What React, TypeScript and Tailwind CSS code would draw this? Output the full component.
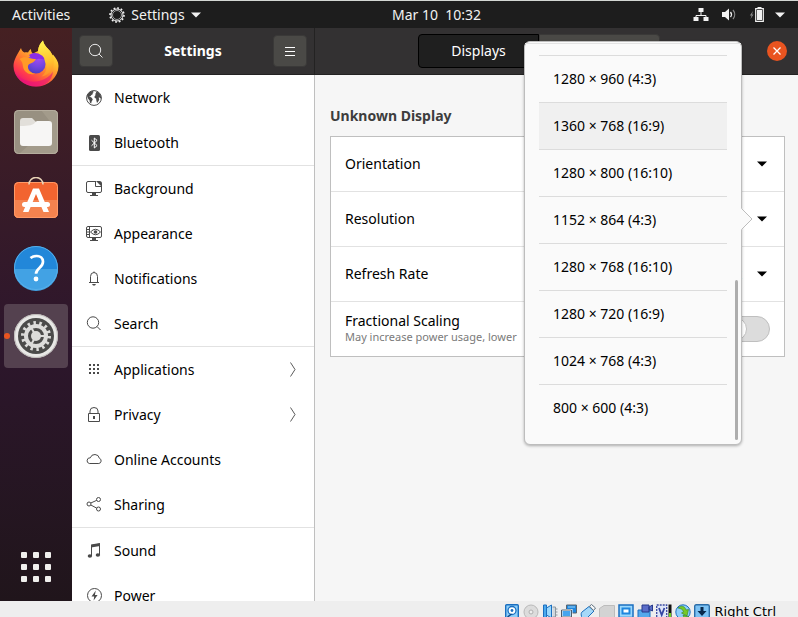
import type { ReactNode } from "react";

const stroke = { fill: "none", stroke: "#4a4a4a", strokeWidth: 1 } as const;

function Icon({ children }: { children: ReactNode }) {
  return (
    <svg width="16" height="16" viewBox="0 0 16 16" className="shrink-0" aria-hidden="true">
      {children}
    </svg>
  );
}

const icons = {
  network: (
    <Icon>
      <circle cx="8" cy="8" r="7.400" {...stroke} />
      <path
        fill="#4a4a4a"
        d="M1 5.200 3.400 2 7 .8l.6 1.400L6.400 3l.6 1-1.600 1L4.500 6.200l-1.500 0 2.800 1.600 1 1.600-1.200 2-.4 2.200-1.400-1L3.600 10.400 2 8.400 1.300 6.400ZM9.800 1.500l3 1 2 2.900.3 2.600-1 .6-.8-1.400-.6.6.6 2-1.400 2.200-.9 1-.7-2.800-.2-1.600-1.400-.6-.2-1.600L9.600 5l-.4-1.200 1-.8Z"
      />
    </Icon>
  ),
  bluetooth: (
    <Icon>
      <rect x="3" width="11" height="16" rx="1.500" fill="#4a4a4a" />
      <path d="m5.500 5.200 5.600 5.400-2.800 2.400V3l2.800 2.400-5.600 5.400" fill="none" stroke="#fff" />
    </Icon>
  ),
  background: (
    <Icon>
      <path d="M10 .5H2A1.500 1.500 0 0 0 .5 2v8A1.500 1.500 0 0 0 2 11.500h12a1.500 1.500 0 0 0 1.500-1.500V5M9.500 1v4.500h5.500" {...stroke} />
      <path d="M10 0h3.500A2.500 2.500 0 0 1 16 2.500V6Z" fill="#4a4a4a" />
      <path d="M6 12h4v2h2v1H4v-1h2Z" fill="#4a4a4a" />
    </Icon>
  ),
  appearance: (
    <Icon>
      <rect x=".5" y=".5" width="15" height="11" rx="1.500" {...stroke} />
      <path d="M3.500 1v10M1 3.500h2M1 6h2M1 8.500h2" {...stroke} />
      <path d="M4.500 6Q9.500.5 14.500 6 9.500 11.500 4.500 6Z" {...stroke} />
      <circle cx="9.500" cy="6" r="1.800" fill="#4a4a4a" />
      <path d="M6 12h4v2h2v1H4v-1h2Z" fill="#4a4a4a" />
    </Icon>
  ),
  notifications: (
    <Icon>
      <path d="M3 11.500h10M4.500 11V5.500a3.500 4 0 0 1 7 0V11M8 1.500V.5" {...stroke} />
      <path d="M6 13h4l-1 1.500H7Z" fill="#4a4a4a" />
    </Icon>
  ),
  search: (
    <Icon>
      <circle cx="7" cy="6.500" r="5.700" {...stroke} />
      <path d="m11 10.500 3.500 3.500" {...stroke} />
    </Icon>
  ),
  applications: (
    <Icon>
      {[3, 7, 11].map((x) => [2, 6, 10].map((y) => <rect key={`${x}-${y}`} x={x} y={y} width="2" height="2" fill="#4a4a4a" />))}
    </Icon>
  ),
  privacy: (
    <Icon>
      <path d="M2.500 6.500h11v8h-11ZM4 6V4a4 3.500 0 0 1 8 0V6" {...stroke} />
      <path d="M7 9h2v3H7Z" fill="#4a4a4a" />
    </Icon>
  ),
  accounts: (
    <Icon>
      <path d="M3.300 11.500h9.500a2.700 2.700 0 0 0 .6-5.200A4.700 4.700 0 0 0 4.300 5.800 2.900 2.900 0 0 0 3.300 11.500Z" {...stroke} />
    </Icon>
  ),
  sharing: (
    <Icon>
      <circle cx="3" cy="7" r="2" {...stroke} />
      <circle cx="12.500" cy="2.500" r="2" {...stroke} />
      <circle cx="12.500" cy="12" r="2" {...stroke} />
      <path d="m4.800 6 6-2.700M4.800 8l6 3.200" {...stroke} />
    </Icon>
  ),
  sound: (
    <Icon>
      <path d="M5.500 13V2.500l8-1.500v11" {...stroke} />
      <path d="m5 1.500 9-1.500v3L5 4.500Z" fill="#4a4a4a" />
      <ellipse cx="3.900" cy="13" rx="2.200" ry="1.800" fill="#4a4a4a" />
      <ellipse cx="11.900" cy="12" rx="2.200" ry="1.800" fill="#4a4a4a" />
    </Icon>
  ),
  power: (
    <Icon>
      <circle cx="8.500" cy="7.500" r="7" {...stroke} />
      <path d="m9.800 2.500-4.300 6h2.700l-.6 4 4-5.500H8.900Z" fill="#4a4a4a" />
    </Icon>
  ),
};

const groups: { label: string; icon: ReactNode; sub?: boolean }[][] = [
  [
    { label: "Network", icon: icons.network },
    { label: "Bluetooth", icon: icons.bluetooth },
  ],
  [
    { label: "Background", icon: icons.background },
    { label: "Appearance", icon: icons.appearance },
    { label: "Notifications", icon: icons.notifications },
    { label: "Search", icon: icons.search },
  ],
  [
    { label: "Applications", icon: icons.applications, sub: true },
    { label: "Privacy", icon: icons.privacy, sub: true },
    { label: "Online Accounts", icon: icons.accounts },
    { label: "Sharing", icon: icons.sharing },
  ],
  [
    { label: "Sound", icon: icons.sound },
    { label: "Power", icon: icons.power },
  ],
];

const resolutions = [
  "1280 × 960 (4:3)",
  "1360 × 768 (16:9)",
  "1280 × 800 (16:10)",
  "1152 × 864 (4:3)",
  "1280 × 768 (16:10)",
  "1280 × 720 (16:9)",
  "1024 × 768 (4:3)",
  "800 × 600 (4:3)",
];

function Caret({ color }: { color: string }) {
  return (
    <svg width="10" height="6" viewBox="0 0 10 6" className="shrink-0" aria-hidden="true">
      <path d="M0 .5h10L5 5.500Z" fill={color} />
    </svg>
  );
}

function TopBar() {
  return (
    <header className="flex h-7 shrink-0 items-center border-t border-[#d3d7d3] bg-[#1d1d1d] text-sm leading-5 text-[#f2f2f2]">
      <div className="flex w-[392px] shrink-0 items-center pl-3">
        <button type="button">Activities</button>
        <button type="button" className="ml-[39px] flex items-center gap-1.5">
          <svg width="16" height="16" viewBox="0 0 16 16" aria-hidden="true">
            <circle cx="8" cy="8" r="7" fill="none" stroke="#f2f2f2" strokeWidth="1.600" strokeDasharray="1.800 1.860" />
            <circle cx="8" cy="8" r="6" fill="none" stroke="#f2f2f2" strokeWidth="1" />
            <circle cx="8" cy="8" r="4.500" fill="none" stroke="#f2f2f2" strokeWidth=".6" />
          </svg>
          Settings
          <Caret color="#f2f2f2" />
        </button>
      </div>
      <button type="button" className="whitespace-pre">{"Mar 10  10:32"}</button>
      <button type="button" aria-label="System menu" className="ml-auto flex items-center gap-2.5 pr-[13px]">
        <span className="flex items-center gap-3">
          <svg width="16" height="16" viewBox="0 0 16 16" aria-hidden="true">
            <path d="M5.500 1h5v4h-5ZM.5 10h5v4h-5ZM10.500 10h5v4h-5Z" fill="#f2f2f2" />
            <path d="M8 5v3M3 11V8.500h10V11" fill="none" stroke="#f2f2f2" />
          </svg>
          <svg width="16" height="16" viewBox="0 0 16 16" aria-hidden="true">
            <path d="M1 5h3l4-3.500v12L4 10H1Z" fill="#f2f2f2" />
            <path d="M9.500 5a4 4 0 0 1 0 5" fill="none" stroke="#f2f2f2" strokeWidth="1.300" />
            <path d="M12 3a7 7 0 0 1 0 9" fill="none" stroke="#8a8a8a" strokeWidth="1.300" />
          </svg>
          <svg width="16" height="16" viewBox="0 0 16 16" aria-hidden="true">
            <path d="M4 4 .8 8.500h1.800L1.500 12l3-4.500H3Z" fill="#8a8a8a" />
            <path d="M6.700 1.700h7.600v12.600H6.700Z" fill="none" stroke="#f2f2f2" strokeWidth="1.200" />
            <path d="M8.500 0h4v2h-4ZM8 3h5v10H8Z" fill="#f2f2f2" />
          </svg>
        </span>
        <Caret color="#f2f2f2" />
      </button>
    </header>
  );
}

function Firefox() {
  return (
    <svg width="46" height="48" viewBox="0 2 46 48" aria-hidden="true">
      <defs>
        <linearGradient id="ffBody" x1="0.850" y1="0.100" x2="0.250" y2="1">
          <stop offset="0" stopColor="#fff44f" />
          <stop offset=".3" stopColor="#ffbd2e" />
          <stop offset=".55" stopColor="#ff7a2f" />
          <stop offset=".8" stopColor="#ff3750" />
          <stop offset="1" stopColor="#e3117a" />
        </linearGradient>
        <linearGradient id="ffFlame" x1=".5" y1="0" x2=".6" y2="1">
          <stop offset="0" stopColor="#fff44f" />
          <stop offset=".6" stopColor="#ffc22e" />
          <stop offset="1" stopColor="#ff8a2a" />
        </linearGradient>
        <radialGradient id="ffGlobe" cx=".6" cy=".15" r=".9">
          <stop offset="0" stopColor="#a94bf5" />
          <stop offset=".55" stopColor="#7446e0" />
          <stop offset="1" stopColor="#4a3ec0" />
        </radialGradient>
      </defs>
      <path
        d="M8 10c.5 2 1.500 3.500 3.500 4.500 1-.5 2.500-.5 3.500 0 1-2 2-3 3-3.500 0 2 .5 3.500 2 4.500L25 13c.5-5 2.500-8 5-10.500 1 5 4 7 7 10.500 1 1.500 1.700 3 2 4.500l1-1c3 3.500 5.500 7 5.500 11.500a22.500 20.500 0 0 1-45 0c0-6 4-12 7.500-18Z"
        fill="url(#ffBody)"
      />
      <path d="M25 13c.5-5 2.500-8 5-10.500 1 5 4 7 7 10.500 3 4 4.500 8 3.500 14-1 6-6 10.500-12 11.500 5-4 6-9 4-14-1-4-6-5-7.500-11.500Z" fill="url(#ffFlame)" />
      <circle cx="23" cy="26" r="9.500" fill="url(#ffGlobe)" />
      <path d="M16 17c4-3 9-2.500 12 0 2 1 3 2.500 3.500 4.500-3-1-5-1-7-.5-2 .5-3 1.500-3.500 2.800Z" fill="#8b2ee5" />
      <path d="M6.500 21c3-2 6-2.500 10-1 2 .8 4 1 6.500 1-1 2.500-3 3.500-5.500 4.500-1.500.6-3 1.500-2.500 4 .3 3 3 5.500 7 6.300-6 2-11-2-12-7-.3-3-.5-5-3.500-7.800Z" fill="#ff9a27" />
      <path d="M1 32c3 8 13 12.500 22 11.500 8-1 14-5 17-10-1 10-8.500 15-17 15S4 43 1 32Z" fill="#e6127c" opacity=".6" />
    </svg>
  );
}

function Files() {
  return (
    <svg width="46" height="46" viewBox="0 0 46 46" aria-hidden="true">
      <rect x="1" y="1" width="44" height="44" rx="4.500" fill="#989081" />
      <path d="M28 1h12.500A4.500 4.500 0 0 1 45 5.500v35a4.500 4.500 0 0 1-4.500 4.500H6l33-30Z" fill="#a39b8b" />
      <rect x="1.500" y="1.500" width="43" height="43" rx="4" fill="none" stroke="#b5ad9e" />
      <path d="M7 12a3 3 0 0 1 3-3h9l4 4h12v8H7Z" fill="#e2dfda" />
      <path d="M7 17c4 0 13 0 15-3.500 1-1.500 2-1.500 3-1.500h11a3 3 0 0 1 3 3v19a3 3 0 0 1-3 3H10a3 3 0 0 1-3-3Z" fill="#f7f6f5" />
    </svg>
  );
}

function Software() {
  return (
    <svg width="46" height="46" viewBox="0 2 46 46" aria-hidden="true">
      <rect x="1" y="7" width="44" height="36" rx="4.500" fill="#f26430" />
      <path d="M1 25h44v13.500a4.500 4.500 0 0 1-4.500 4.500h-35A4.500 4.500 0 0 1 1 38.500Z" fill="#f5834f" />
      <rect x="1.500" y="7.500" width="43" height="35" rx="4" fill="none" stroke="#ff9a68" />
      <path d="M16 9.500a7 7 0 0 1 14 0" fill="none" stroke="#e8d3b6" strokeWidth="1.600" />
      <path d="m20 13.500h6L36 37h-5.500L23 19l-7.500 18H10Z" fill="#fff" />
      <rect x="9" y="27" width="28" height="5" rx="2.500" fill="#fff" />
    </svg>
  );
}

function Help() {
  return (
    <svg width="46" height="46" viewBox="0 0 46 46" aria-hidden="true">
      <circle cx="23" cy="23" r="22" fill="#2287d9" />
      <path d="M1 24h44a22 22 0 0 1-44 0Z" fill="#42a2e4" />
      <circle cx="23" cy="23" r="21.500" fill="none" stroke="#57afe9" />
      <path d="M17.500 13q2.500-2 6-2c4 0 6.500 2.200 6.500 5.700 0 6-7 6.500-7 12" fill="none" stroke="#fff" strokeWidth="2.700" />
      <circle cx="23" cy="34" r="2.400" fill="#fff" />
    </svg>
  );
}

function SettingsGear() {
  return (
    <svg width="46" height="46" viewBox="0 0 46 46" aria-hidden="true">
      <circle cx="23" cy="23" r="22" fill="#e8e8e6" />
      <circle cx="23" cy="23" r="21.500" fill="none" stroke="#bdbab8" />
      <circle cx="23" cy="23" r="18" fill="#4b4b4a" />
      <circle cx="23" cy="23" r="13" fill="none" stroke="#dcdcda" strokeWidth="4" strokeDasharray="2.400 3.434" />
      <circle cx="23" cy="23" r="10" fill="none" stroke="#dcdcda" strokeWidth="4" />
      <circle cx="23" cy="23" r="5" fill="#dcdcda" />
      <path d="M23 23h10M23 23l-5-8.700M23 23l-5 8.700" stroke="#dcdcda" strokeWidth="2" />
    </svg>
  );
}

function Dock() {
  const slot = "flex h-16 w-16 items-center justify-center rounded";
  return (
    <nav
      aria-label="Dock"
      className="flex w-[72px] shrink-0 flex-col items-center gap-1 bg-linear-to-b from-[#452022] via-[#2d162c] via-55% to-[#20151b] pt-1"
    >
      <button type="button" aria-label="Firefox" className={slot}><Firefox /></button>
      <button type="button" aria-label="Files" className={slot}><Files /></button>
      <button type="button" aria-label="Software" className={slot}><Software /></button>
      <button type="button" aria-label="Help" className={slot}><Help /></button>
      <button type="button" aria-label="Settings" className="relative flex h-16 w-16 items-center justify-center rounded bg-[#54414f]">
        <span className="absolute left-0 h-1.5 w-1.5 rounded-full bg-[#e95420]" />
        <SettingsGear />
      </button>
      <button type="button" aria-label="Show applications" className="mt-auto mb-[19px] grid grid-cols-3 gap-1.5">
        {Array.from({ length: 9 }, (_, i) => (
          <span key={i} className="h-1.5 w-1.5 rounded-[1px] bg-[#f0efed]" />
        ))}
      </button>
    </nav>
  );
}

function Sidebar() {
  const headerButton = "flex h-8 w-[34px] items-center justify-center rounded border border-[#3a3938] bg-[#4a4946]";
  return (
    <aside className="flex w-[243px] shrink-0 flex-col">
      <div className="flex h-[47px] shrink-0 items-center justify-between border-r border-b border-[#232222] bg-[#333132] px-[7px]">
        <button type="button" aria-label="Search" className={headerButton}>
          <svg width="16" height="16" viewBox="0 0 16 16" fill="none" stroke="#e8e8e8" aria-hidden="true">
            <circle cx="7" cy="7" r="5.700" />
            <path d="m11 11 3.500 3.500" />
          </svg>
        </button>
        <h1 className="text-sm leading-5 font-bold text-white">Settings</h1>
        <button type="button" aria-label="Menu" className={headerButton}>
          <svg width="10" height="9" viewBox="0 0 10 9" stroke="#fff" aria-hidden="true">
            <path d="M0 .5h10M0 4.500h10M0 8.500h10" />
          </svg>
        </button>
      </div>
      <nav aria-label="Settings panels" className="min-h-0 flex-1 divide-y divide-[#e2e2e2] overflow-hidden border-r border-[#bfbfbf] bg-white">
        {groups.map((group) => (
          <ul key={group[0].label}>
            {group.map((item) => (
              <li key={item.label}>
                <button type="button" className="flex h-[45px] w-full items-center gap-3 pr-[18px] pl-3.5 text-left text-sm leading-5 text-black">
                  {item.icon}
                  <span className="flex-1">{item.label}</span>
                  {item.sub && (
                    <svg width="6" height="16" viewBox="0 0 6 16" fill="none" stroke="#5a5a5a" aria-hidden="true">
                      <path d="m.5.5 4.500 7L.5 14.500" />
                    </svg>
                  )}
                </button>
              </li>
            ))}
          </ul>
        ))}
      </nav>
    </aside>
  );
}

function ResolutionMenu() {
  return (
    <div className="absolute -top-[151px] right-[42px] z-10 w-[218px] rounded-md border border-[#bdbdbd] bg-[#fafafa] px-3.5 pb-[13px] shadow-[0_1px_3px_rgba(0,0,0,0.3)]">
      <div className="-mx-3.5 mb-[11px] h-0.5 border-b border-[#e3e3e3]" />
      <ul role="listbox" aria-label="Resolution">
        {resolutions.map((label, i) => (
          <li
            key={label}
            role="option"
            aria-selected={i === 1}
            className="flex h-[47px] items-center border-t border-[#dcdcdc] px-3.5 text-sm leading-5 text-black aria-selected:bg-[#f0f0f0]"
          >
            {label}
          </li>
        ))}
      </ul>
      <span className="absolute right-[3px] bottom-1 h-40 w-[3px] rounded-full bg-[#adadad]" />
      <svg width="12" height="22" viewBox="0 0 12 22" className="absolute top-[166px] -right-3" aria-hidden="true">
        <path d="M0 0 11 11 0 22Z" fill="#fafafa" />
        <path d="m.5.5 10.500 10.500L.5 21.500" fill="none" stroke="#bdbdbd" />
      </svg>
    </div>
  );
}

function ChoiceRow({ label, value, children }: { label: string; value: string; children?: ReactNode }) {
  return (
    <div className="relative">
      <button type="button" className="flex h-[54px] w-full items-center pr-[17px] pl-3.5 text-sm leading-5 text-black">
        {label}
        <span className="mr-[15px] ml-auto">{value}</span>
        <Caret color="#000" />
      </button>
      {children}
    </div>
  );
}

function DisplaysPanel() {
  return (
    <main className="flex min-w-0 flex-1 flex-col bg-[#f6f6f6]">
      <div className="flex h-[47px] shrink-0 items-center border-b border-[#232222] bg-[#333132] text-sm leading-5 text-white">
        <div role="tablist" aria-label="Panel" className="flex h-full flex-1 items-center justify-center">
          <button type="button" role="tab" aria-selected="true" className="h-[34px] w-[121px] rounded-l border border-black bg-[#1f1f1f]">
            Displays
          </button>
          <button type="button" role="tab" aria-selected="false" className="h-[34px] w-[121px] rounded-r border border-[#3a3938] bg-[#4a4946]">
            Night Light
          </button>
        </div>
        <button type="button" aria-label="Close" className="mr-[11px] ml-1 flex h-5 w-5 items-center justify-center rounded-full bg-[#e95420]">
          <svg width="8" height="8" viewBox="0 0 8 8" stroke="#fff" strokeWidth="1.300" aria-hidden="true">
            <path d="m.5.5 7 7M7.500.5l-7 7" />
          </svg>
        </button>
      </div>
      <section className="pt-[31px] pr-[13px] pl-[15px]">
        <h2 className="mb-2.5 text-sm leading-5 font-bold text-[#3d3d3d]">Unknown Display</h2>
        <div className="divide-y divide-[#e2e2e2] border border-[#bfbfbf] bg-white">
          <ChoiceRow label="Orientation" value="Landscape" />
          <ChoiceRow label="Resolution" value="800 × 600 (4:3)">
            <ResolutionMenu />
          </ChoiceRow>
          <ChoiceRow label="Refresh Rate" value="60.00 Hz" />
          <label className="flex h-[54px] items-center gap-3 px-3.5">
            <span className="min-w-0 flex-1">
              <span className="block text-sm leading-4 text-black">Fractional Scaling</span>
              <span className="block text-[11px] leading-4 text-[#7a7a7a]">May increase power usage, lower</span>
            </span>
            <input
              type="checkbox"
              className="h-[26px] w-12 shrink-0 appearance-none rounded-full border border-[#bfbfbf] bg-[#dcdcdc] before:block before:h-6 before:w-6 before:rounded-full before:border before:border-[#bfbfbf] before:bg-white"
            />
          </label>
        </div>
      </section>
    </main>
  );
}

function StatusIcon({ children }: { children: ReactNode }) {
  return (
    <svg width="16" height="16" viewBox="0 0 16 16" className="shrink-0" aria-hidden="true">
      {children}
    </svg>
  );
}

function StatusBar() {
  const blue = "#1b6fc0";
  return (
    <footer className="flex h-4 shrink-0 items-start justify-end gap-[5px] overflow-hidden bg-[#eeeeee] pt-[3px] pr-[22px]">
      <div className="flex gap-[3px]">
        <StatusIcon>
          <rect x="1.700" y=".7" width="12.600" height="15" rx="1" fill="#8fd0fa" stroke={blue} strokeWidth="1.400" />
          <circle cx="8" cy="6.500" r="4" fill="#fff" stroke={blue} strokeWidth="1.300" />
          <circle cx="8" cy="6.500" r="1.400" fill={blue} />
          <path d="m3.500 13 4-3" stroke="#0d4a8a" strokeWidth="1.500" />
        </StatusIcon>
        <StatusIcon>
          <circle cx="8" cy="8" r="7" fill="#dcdcdc" stroke="#b9b9b9" />
          <circle cx="8" cy="8" r="2" fill="#eee" stroke="#b0b0b0" />
        </StatusIcon>
        <StatusIcon>
          <path d="M1.500 1h3v13h-3Z" fill="#4aa8ec" stroke={blue} />
          <path d="m4.500 4 5-3v13l-5-3Z" fill="#9ad8fd" stroke={blue} />
          <path d="M10.500 3h3v10h-3" fill="#cfd8de" stroke="#8d979e" />
          <path d="M14 5h1.500M14 8h1.500M14 11h1.500" stroke="#8d979e" />
        </StatusIcon>
        <StatusIcon>
          <path d="M5.500 1h10v8h-10Z" fill="#1f86de" stroke="#59646e" />
          <path d="M7 2.500h7v1H7Z" fill="#9ad8fd" />
          <path d="M.5 6h10v7H.5Z" fill="#45a5ee" stroke="#fff" strokeWidth="2" />
          <path d="M.5 6h10v7H.5ZM3 14.500h6" fill="none" stroke="#4b5c6b" />
        </StatusIcon>
        <StatusIcon>
          <path d="M2 8 9 2.500 14 7l-7 7c-2 1.500-5 1-5.500-1.500s-.5-3.500.5-4.500Z" fill="#a5d8f8" stroke={blue} />
          <path d="m9.500 2.200 2-1.700 4 3.500-2 2.500Z" fill="#f6f8fa" stroke="#60717e" />
        </StatusIcon>
        <StatusIcon>
          <path d="M.5 4.500 5 1.500h10.500v14H.5Z" fill="#d3d3d3" stroke="#bcbcbc" />
        </StatusIcon>
        <StatusIcon>
          <rect x="1" y="1" width="14" height="12.500" fill="#9ad8fd" stroke={blue} strokeWidth="1.500" />
          <rect x="4.500" y="4.500" width="7" height="5" fill="#fff" stroke="#1f86de" strokeWidth="2" />
          <path d="M4 15.500h8" stroke="#7a8790" />
        </StatusIcon>
        <StatusIcon>
          <path d="M1 6h12v9H1Z" fill="#54a9ec" stroke={blue} />
          <path d="M5 1h7v7H5ZM12 3l3.500-2v6L12 5.500Z" fill="#5a6cc8" stroke="#27398a" />
        </StatusIcon>
        <StatusIcon>
          <path d="M.7 1h10v14H.7Z" fill="#dfe6f8" stroke="#3a49a0" strokeWidth="1.300" strokeDasharray="2 1" />
          <path d="m3 4 2.700 7L8.400 4" fill="none" stroke="#3546a4" strokeWidth="1.800" />
          <path d="M12.500.5h3V16h-3Z" fill="#111" />
          <path d="M13 9h2v7h-2Z" fill="#6fd21f" />
        </StatusIcon>
        <StatusIcon>
          <circle cx="8" cy="8" r="7.200" fill="#8fd0fa" stroke={blue} />
          <path d="M3 4c3-3 7-2 8 2l2.500-.5L12 12l-5.500-3 2-1C8 5.500 6 4.500 3 4ZM8 11l6 2-4 3Z" fill="#76c928" stroke="#348320" strokeWidth=".6" />
        </StatusIcon>
        <StatusIcon>
          <rect x=".7" y=".7" width="14.600" height="15" rx="1.500" fill="#7cc2f4" stroke="#2b6da8" strokeWidth="1.400" />
          <path d="M6.500 3h3v4h3L8 12 3.500 7h3Z" fill="#08294d" />
        </StatusIcon>
      </div>
      <span className="font-['DejaVu_Sans',sans-serif] text-[13px] leading-4 text-black">Right Ctrl</span>
    </footer>
  );
}

export default function App() {
  return (
    <div className="flex h-screen flex-col overflow-hidden bg-[#f6f6f6] font-['Noto_Sans',sans-serif]">
      <TopBar />
      <div className="flex min-h-0 flex-1">
        <Dock />
        <Sidebar />
        <DisplaysPanel />
      </div>
      <StatusBar />
    </div>
  );
}
